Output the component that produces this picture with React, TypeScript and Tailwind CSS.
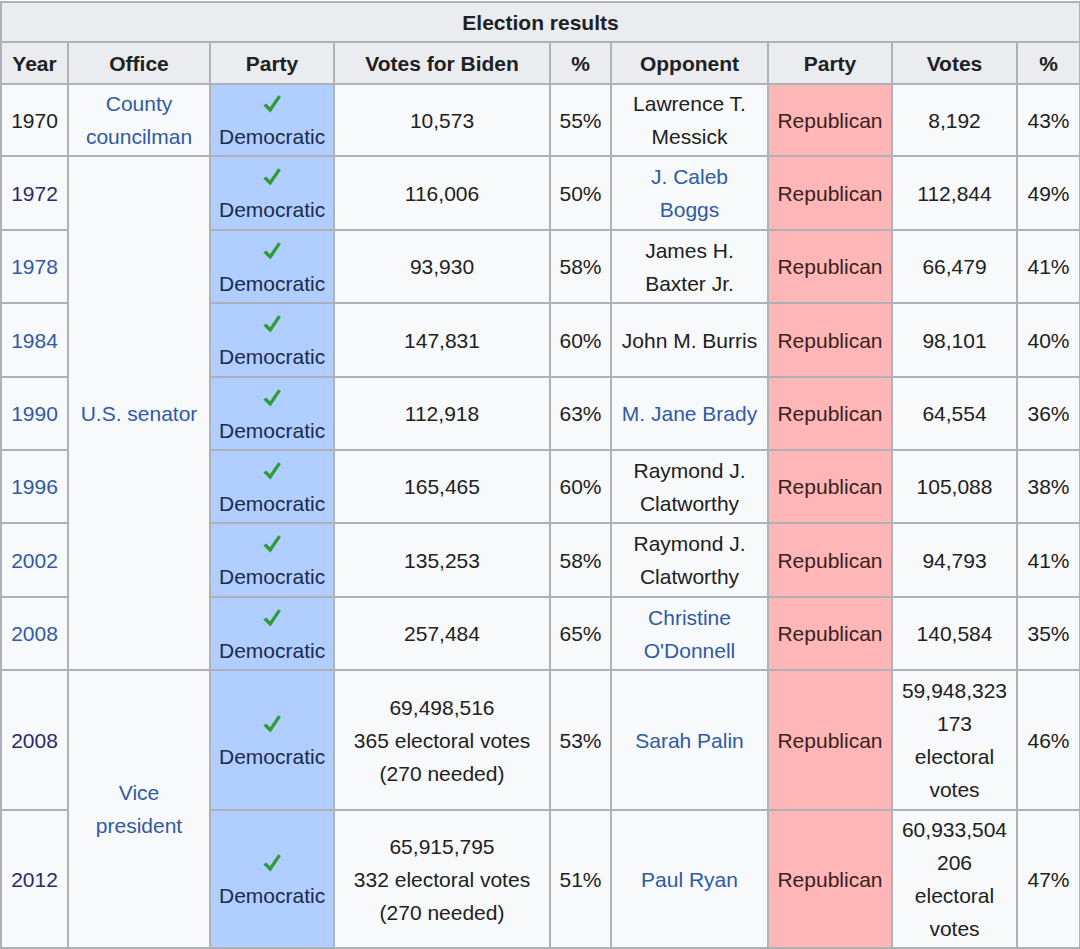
import React from "react";

type Row = {
  year: string;
  yearKind: "plain" | "link" | "visited";
  biden: React.ReactNode;
  pct: string;
  opponent: string;
  oppLink: boolean;
  votes: React.ReactNode;
  oppPct: string;
  h: string;
};

const Check = () => (
  <svg width="20" height="20" viewBox="0 0 18 18" className="inline-block align-[-3px]">
    <path d="M1.2 10.4 L3.8 8.5 L7.2 12 L14.6 1.2 L17 2.8 L7.6 16.6 Z" fill="#2e9b35" />
  </svg>
);

const cell = "border-2 border-[#aeb2b8] px-2 py-0 text-center align-middle";

const rows: Row[] = [
  { year: "1970", yearKind: "plain", biden: "10,573", pct: "55%", opponent: "Lawrence T. Messick", oppLink: false, votes: "8,192", oppPct: "43%", h: "h-[72px]" },
  { year: "1972", yearKind: "visited", biden: "116,006", pct: "50%", opponent: "J. Caleb Boggs", oppLink: true, votes: "112,844", oppPct: "49%", h: "h-[74px]" },
  { year: "1978", yearKind: "link", biden: "93,930", pct: "58%", opponent: "James H. Baxter Jr.", oppLink: false, votes: "66,479", oppPct: "41%", h: "h-[73px]" },
  { year: "1984", yearKind: "link", biden: "147,831", pct: "60%", opponent: "John M. Burris", oppLink: false, votes: "98,101", oppPct: "40%", h: "h-[74px]" },
  { year: "1990", yearKind: "link", biden: "112,918", pct: "63%", opponent: "M. Jane Brady", oppLink: true, votes: "64,554", oppPct: "36%", h: "h-[73px]" },
  { year: "1996", yearKind: "link", biden: "165,465", pct: "60%", opponent: "Raymond J. Clatworthy", oppLink: false, votes: "105,088", oppPct: "38%", h: "h-[73px]" },
  { year: "2002", yearKind: "link", biden: "135,253", pct: "58%", opponent: "Raymond J. Clatworthy", oppLink: false, votes: "94,793", oppPct: "41%", h: "h-[74px]" },
  { year: "2008", yearKind: "link", biden: "257,484", pct: "65%", opponent: "Christine O'Donnell", oppLink: true, votes: "140,584", oppPct: "35%", h: "h-[73px]" },
  {
    year: "2008",
    yearKind: "visited",
    biden: (<>69,498,516<br />365 electoral votes (270 needed)</>),
    pct: "53%",
    opponent: "Sarah Palin",
    oppLink: true,
    votes: (<>59,948,323<br />173 electoral votes</>),
    oppPct: "46%",
    h: "h-[140px]",
  },
  {
    year: "2012",
    yearKind: "visited",
    biden: (<>65,915,795<br />332 electoral votes (270 needed)</>),
    pct: "51%",
    opponent: "Paul Ryan",
    oppLink: true,
    votes: (<>60,933,504<br />206 electoral votes</>),
    oppPct: "47%",
    h: "h-[138px]",
  },
];

const yearColor = {
  plain: "text-[#202122]",
  link: "text-[#2f5aa8]",
  visited: "text-[#2b2a6b]",
};

export default function App() {
  return (
    <div className="min-h-screen bg-white pt-px">
      <table
        className="table-fixed border-collapse w-[1079px] bg-[#f8f9fa] text-[#202122] text-[21px] leading-[33px]"
        style={{ fontFamily: '"Liberation Sans", Arial, sans-serif' }}
      >
        <colgroup>
          <col className="w-[67px]" />
          <col className="w-[142px]" />
          <col className="w-[124px]" />
          <col className="w-[216px]" />
          <col className="w-[61px]" />
          <col className="w-[157px]" />
          <col className="w-[124px]" />
          <col className="w-[125px]" />
          <col className="w-[63px]" />
        </colgroup>
        <thead>
          <tr className="h-[40px]">
            <th colSpan={9} className={`${cell} bg-[#eaecf0] font-bold`}>
              Election results
            </th>
          </tr>
          <tr className="h-[42px]">
            {["Year", "Office", "Party", "Votes for Biden", "%", "Opponent", "Party", "Votes", "%"].map((h, i) => (
              <th key={i} className={`${cell} bg-[#eaecf0] font-bold`}>
                {h}
              </th>
            ))}
          </tr>
        </thead>
        <tbody>
          {rows.map((r, i) => (
            <tr key={i} className={r.h}>
              <td className={`${cell} ${yearColor[r.yearKind]}`}>{r.year}</td>
              {i === 0 && <td className={`${cell} text-[#2f5aa8]`}>County councilman</td>}
              {i === 1 && (
                <td rowSpan={7} className={`${cell} text-[#2f5aa8]`}>
                  U.S. senator
                </td>
              )}
              {i === 8 && (
                <td rowSpan={2} className={`${cell} text-[#2f5aa8]`}>
                  Vice president
                </td>
              )}
              <td className={`${cell} bg-[#b0ceff] text-[#1b2b4a]`}>
                <Check />
                <br />
                Democratic
              </td>
              <td className={cell}>{r.biden}</td>
              <td className={cell}>{r.pct}</td>
              <td className={`${cell} ${r.oppLink ? "text-[#2f5aa8]" : ""}`}>{r.opponent}</td>
              <td className={`${cell} bg-[#ffb6b6] text-[#3a1f1f]`}>Republican</td>
              <td className={cell}>{r.votes}</td>
              <td className={cell}>{r.oppPct}</td>
            </tr>
          ))}
        </tbody>
      </table>
    </div>
  );
}
